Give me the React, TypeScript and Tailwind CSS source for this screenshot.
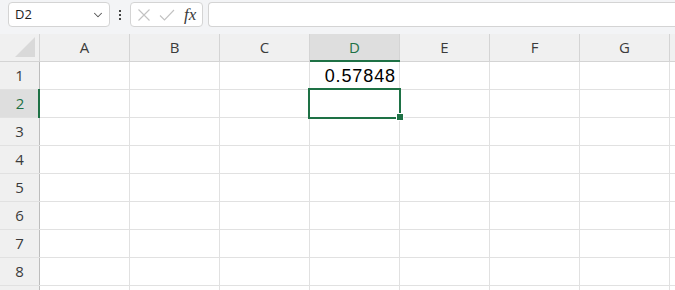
import { ChevronDown } from "lucide-react";

const columns = ["A", "B", "C", "D", "E", "F", "G", ""];
const rows = [1, 2, 3, 4, 5, 6, 7, 8, 9];

const green = "border-[#1e7145]";

function FormulaBar() {
  return (
    <div className="flex h-[34px] shrink-0 items-start gap-0 bg-[#f3f4f6] pt-[2px] pl-[8px]">
      {/* name box */}
      <div className="flex h-[25px] w-[102px] items-center justify-between rounded-[4px] border border-[#d4d4d4] bg-white pl-[6px] pr-[4px]">
        <span className="text-[13px] text-[#1f1f1f]">D2</span>
        <ChevronDown className="h-[14px] w-[14px] text-[#555]" strokeWidth={1.8} />
      </div>
      {/* drag handle */}
      <div className="flex h-[25px] w-[20px] flex-col items-center justify-center gap-[2px]">
        <span className="h-[2px] w-[2px] bg-[#444]" />
        <span className="h-[2px] w-[2px] bg-[#444]" />
        <span className="h-[2px] w-[2px] bg-[#444]" />
      </div>
      {/* cancel / enter / fx */}
      <div className="flex h-[25px] w-[73px] items-center rounded-[4px] border border-[#d4d4d4] bg-white pl-[6px]">
        <svg width="14" height="14" viewBox="0 0 14 14">
          <path d="M1.5 1.5 L12.5 12.5 M12.5 1.5 L1.5 12.5" stroke="#c2c2c2" strokeWidth="1.1" fill="none" />
        </svg>
        <svg width="16" height="14" viewBox="0 0 16 14" className="ml-[8px]">
          <path d="M1 7.5 L5.5 12 L15 2" stroke="#c2c2c2" strokeWidth="1.1" fill="none" />
        </svg>
        <span
          className="ml-[9px] text-[17px] italic leading-none text-[#3a3a3a]"
          style={{ fontFamily: '"Liberation Serif", serif' }}
        >
          fx
        </span>
      </div>
      {/* formula input */}
      <div className="ml-[5px] h-[25px] flex-1 rounded-l-[4px] border border-r-0 border-[#d4d4d4] bg-white" />
    </div>
  );
}

function HeaderRow() {
  return (
    <div className="flex h-[28px] shrink-0 border-b border-[#d4d4d4] bg-[#f0f0f0]">
      <div className="relative w-[40px] shrink-0 border-r border-[#d4d4d4]">
        <svg width="22" height="22" viewBox="0 0 22 22" className="absolute right-[3px] bottom-[3px]">
          <path d="M21 1 L21 21 L1 21 Z" fill="#d9d9d9" />
        </svg>
      </div>
      {columns.map((c, i) => {
        const sel = c === "D";
        return (
          <div
            key={i}
            className={
              sel
                ? "relative flex w-[90px] shrink-0 items-center justify-center border-r border-[#d4d4d4] bg-[#dedede] text-[15px] text-[#1e7145]"
                : "flex w-[90px] shrink-0 items-center justify-center border-r border-[#d4d4d4] text-[15px] text-[#3b3b3b]"
            }
          >
            {c}
            {sel && <span className="absolute -bottom-[1px] left-0 right-[-1px] h-[2px] bg-[#1e7145]" />}
          </div>
        );
      })}
    </div>
  );
}

function Row({ n }: { n: number }) {
  const selRow = n === 2;
  return (
    <div className="flex h-[28px] shrink-0 border-b border-[#e1e1e1]">
      <div
        className={
          selRow
            ? "relative flex w-[40px] shrink-0 items-center justify-center bg-[#dedede] text-[15px] text-[#1e7145]"
            : "flex w-[40px] shrink-0 items-center justify-center border-r border-[#bdbdbd] bg-[#f0f0f0] text-[15px] text-[#3b3b3b]"
        }
      >
        {n < 9 ? n : null}
        {selRow && <span className="absolute top-[-1px] bottom-[-1px] right-0 w-[2px] bg-[#1e7145]" />}
      </div>
      {columns.map((c, i) => {
        const isSel = selRow && c === "D";
        return (
          <div key={i} className="relative flex w-[90px] shrink-0 items-center justify-end border-r border-[#e1e1e1] pr-[3px]">
            {n === 1 && c === "D" && (
              <span
                className="pt-[1px] text-[18px] tracking-[0.9px] text-black"
                style={{ fontFamily: '"Liberation Sans", Arial, sans-serif' }}
              >
                0.57848
              </span>
            )}
            {isSel && (
              <>
                <span className={`absolute -inset-[2px] z-10 border-2 ${green}`} />
                <span className="absolute right-[-4px] bottom-[-3px] z-20 h-[6px] w-[6px] bg-[#1e7145] outline outline-1 outline-white" />
              </>
            )}
          </div>
        );
      })}
    </div>
  );
}

export default function App() {
  return (
    <div
      className="flex h-[290px] w-[675px] flex-col overflow-hidden bg-white"
      style={{ fontFamily: '"Open Sans", "Noto Sans", sans-serif' }}
    >
      <FormulaBar />
      <HeaderRow />
      {rows.map((n) => (
        <Row key={n} n={n} />
      ))}
    </div>
  );
}
